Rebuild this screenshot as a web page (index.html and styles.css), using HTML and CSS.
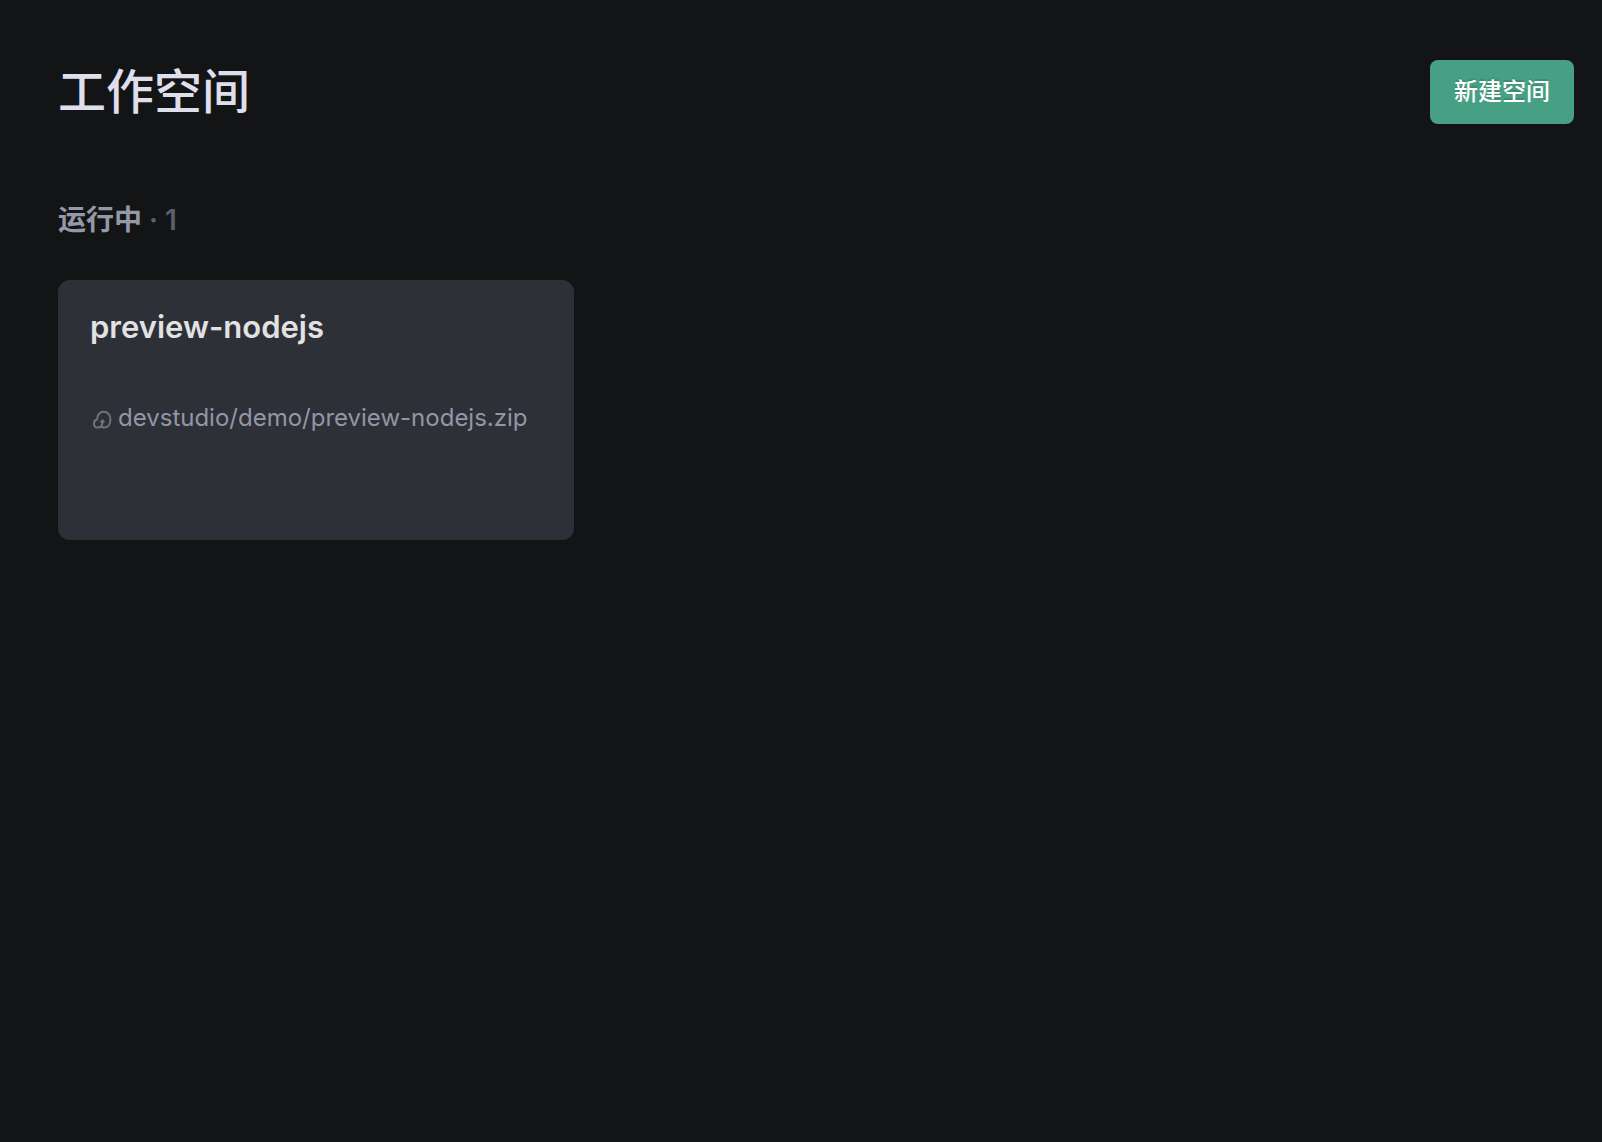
FILE: index.html
```html
<!DOCTYPE html>
<html lang="zh-CN">
<head>
  <meta charset="UTF-8" />
  <meta name="viewport" content="width=device-width, initial-scale=1.0" />
  <title>工作空间</title>
  <link rel="stylesheet" href="styles.css">
</head>
<body>
  <header class="page-header">
    <h1>工作空间</h1>
    <button type="button" class="create-btn">新建空间</button>
  </header>

  <main>
    <h2 class="section-title">运行中 <span class="count">· 1</span></h2>

    <div class="workspace-list">
      <article class="workspace-card">
        <h3>preview-nodejs</h3>
        <p class="source">
          <svg class="source-icon" viewBox="0 0 24 24" aria-hidden="true">
            <path d="M8 19.6C5.6 19.6 4 17.9 4 15.7C4 13.2 5.6 11.6 7.2 11.2C7.2 7 9.8 3.8 13.6 3.8C17.6 3.8 20.4 7 20.4 11.4C20.4 16.2 17.8 19.6 14 19.6C12.8 19.6 11.8 19.3 11 18.6C10.2 19.3 9.2 19.6 8 19.6ZM11 18.6C12.1 17.5 12.4 16 12.4 13M10.6 14.6L12.4 12.4L14.2 14.6" />
          </svg>
          <span>devstudio/demo/preview-nodejs.zip</span>
        </p>
      </article>
    </div>
  </main>
</body>
</html>
```

FILE: styles.css
```css
body {
  font-family: Inter, "Noto Sans CJK SC", sans-serif;
  background: #131416;
  color: #dfdfeb;
  padding: 60px 28px 60px 58px;
  margin: 0;
}
h1, h2, h3, p {
  margin: 0;
}
.page-header {
  display: flex;
  justify-content: space-between;
  align-items: center;
  margin-bottom: 76px;
}
h1 {
  font-size: 48px;
  line-height: 64px;
  font-weight: 500;
}
.create-btn {
  font-family: inherit;
  font-size: 24px;
  line-height: 32px;
  font-weight: 500;
  color: white;
  background: #48a084;
  padding: 16px 24px;
  border: none;
  border-radius: 8px;
  text-shadow: 0 -2px 0 rgba(0, 0, 0, 0.12);
  cursor: pointer;
}
.create-btn:hover {
  background: #53b094;
}
.section-title {
  font-size: 28px;
  line-height: 40px;
  font-weight: 600;
  color: #9498a7;
  margin-bottom: 40px;
}
.count {
  color: #5b5f6b;
}
.workspace-list {
  display: flex;
  flex-wrap: wrap;
  gap: 32px;
}
.workspace-card {
  box-sizing: border-box;
  width: 516px;
  max-width: 100%;
  min-height: 260px;
  padding: 28px 32px;
  border-radius: 12px;
  background: #2e3038;
}
.workspace-card h3 {
  font-size: 31px;
  line-height: 38px;
  font-weight: 600;
  color: #e2e2e2;
  margin-bottom: 54px;
}
.source {
  display: flex;
  align-items: center;
  gap: 4px;
  font-size: 24px;
  line-height: 36px;
  color: #9296a6;
}
.source-icon {
  flex: none;
  width: 24px;
  height: 24px;
  margin-top: 4px;
  fill: none;
  stroke: #737375;
  stroke-width: 2;
  stroke-linejoin: round;
}
```
